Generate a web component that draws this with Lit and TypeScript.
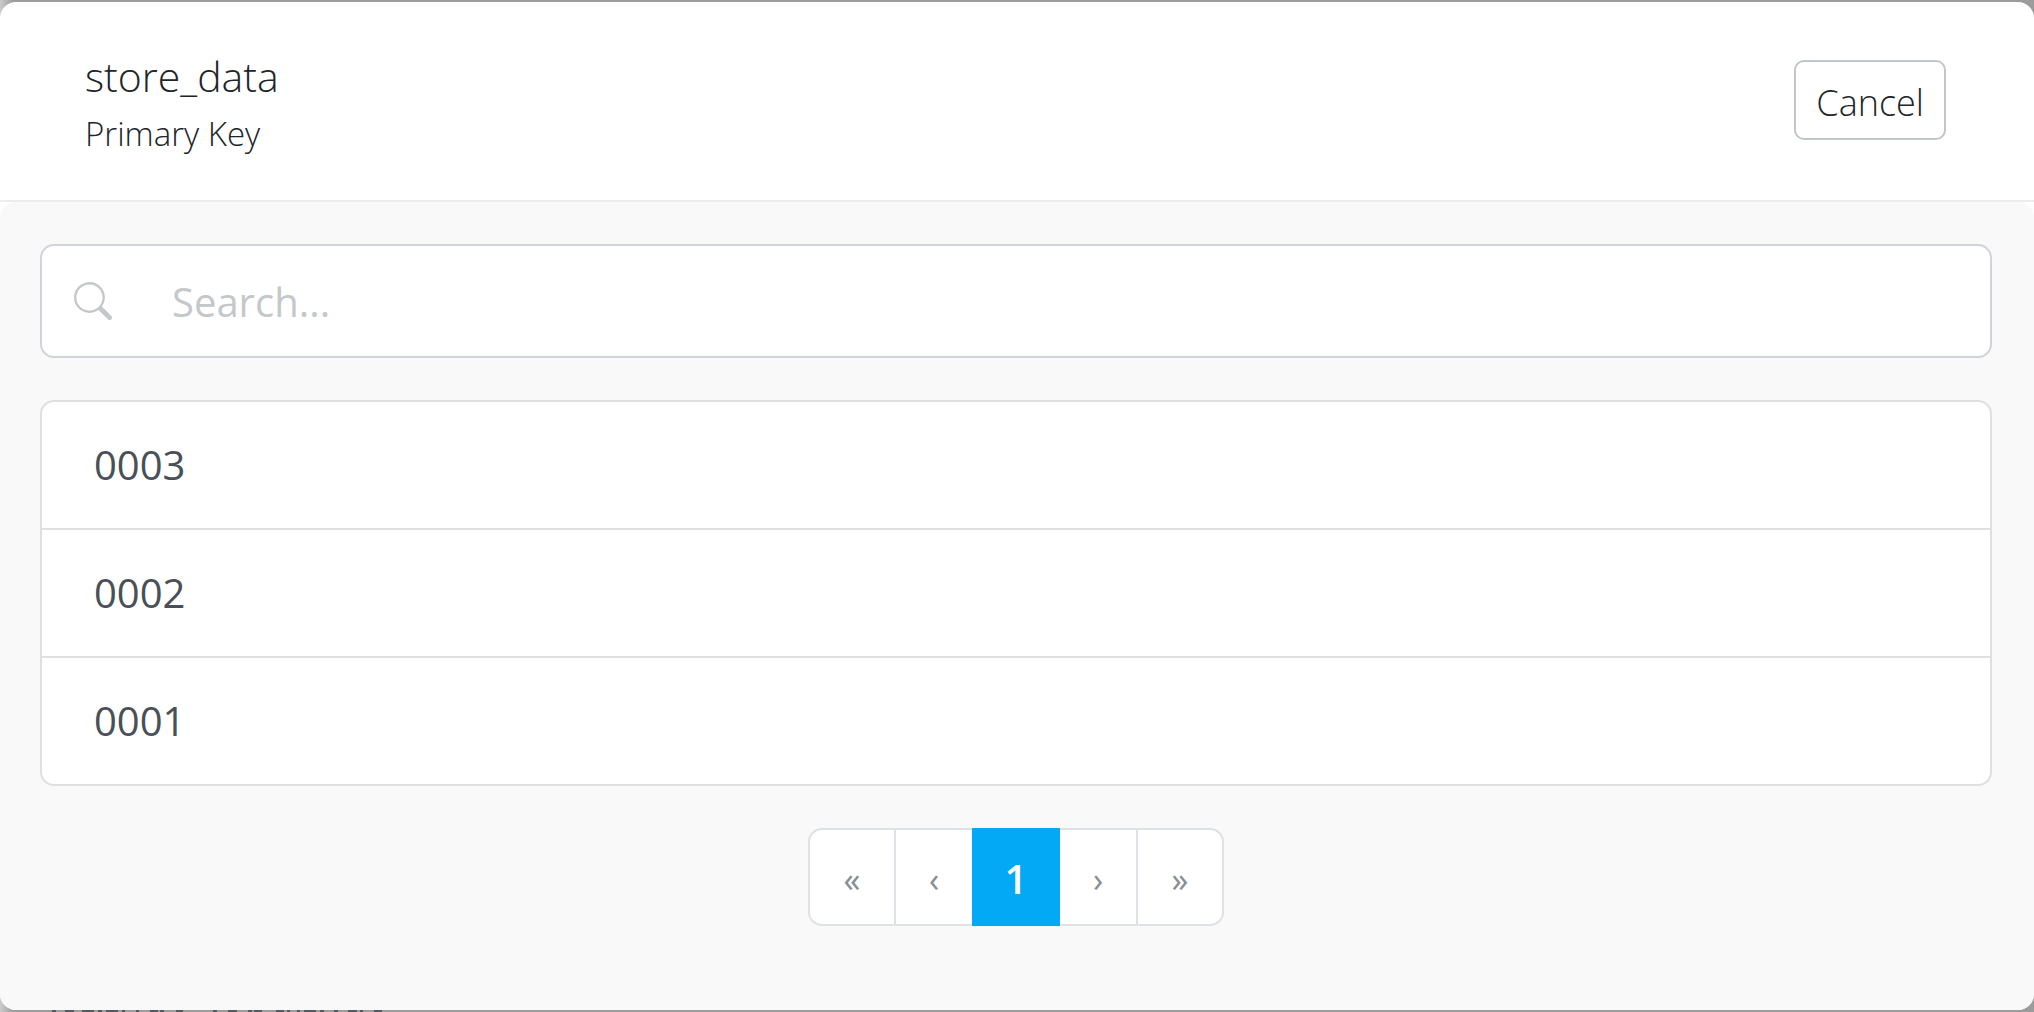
import { LitElement, html, css, svg } from "lit";
import { customElement, property, state } from "lit/decorators.js";

@customElement("search-field")
export class SearchField extends LitElement {
  static styles = css`
    :host { display: block; }
    .field {
      box-sizing: border-box;
      display: flex;
      align-items: center;
      height: 114px;
      padding: 0 32px;
      gap: 60px;
      background: #fff;
      border: 2px solid #ced4da;
      border-radius: 14px;
    }
    .icon { flex: none; width: 38px; height: 38px; fill: #c4c8cb; }
    .input {
      flex: 1;
      min-width: 0;
      padding: 2px 0 0;
      border: 0;
      outline: 0;
      background: transparent;
      color: #212529;
      font: 400 40px/60px "Open Sans", "Noto Sans", sans-serif;
    }
    .input::placeholder { color: #c4c8cb; opacity: 1; }
  `;

  render() {
    return html`
      <div class="field">
        <svg class="icon" viewBox="0 0 16 16" aria-hidden="true">
          <path d="M11.742 10.344a6.5 6.5 0 1 0-1.397 1.398h-.001c.03.04.062.078.098.115l3.85 3.85a1 1 0 0 0 1.415-1.414l-3.85-3.85a1.007 1.007 0 0 0-.115-.1zM12 6.5a5.5 5.5 0 1 1-11 0 5.5 5.5 0 0 1 11 0z" />
        </svg>
        <input class="input" type="text" placeholder="Search..." aria-label="Search" />
      </div>
    `;
  }
}

@customElement("key-list")
export class KeyList extends LitElement {
  @property({ attribute: false }) items: string[] = [];

  static styles = css`
    :host { display: block; }
    .list {
      margin: 0;
      padding: 0;
      list-style: none;
      background: #fff;
      border: 2px solid #dfdfdf;
      border-radius: 14px;
      overflow: hidden;
    }
    .row + .row { border-top: 2px solid #dfdfdf; }
    .item {
      display: block;
      width: 100%;
      padding: 32px 52px;
      border: 0;
      background: none;
      color: #495057;
      text-align: left;
      font: 400 40px/62px "Open Sans", "Noto Sans", sans-serif;
      cursor: pointer;
    }
  `;

  render() {
    return html`
      <ul class="list">
        ${this.items.map((item) => html`<li class="row"><button class="item" type="button">${item}</button></li>`)}
      </ul>
    `;
  }
}

@customElement("page-nav")
export class PageNav extends LitElement {
  @state() private page = 1;

  static styles = css`
    :host { display: block; }
    .pages { display: flex; justify-content: center; }
    .page {
      box-sizing: border-box;
      height: 98px;
      padding: 4px 0 0;
      margin: 0 0 0 -2px;
      border: 2px solid #dee2e6;
      background: #fff;
      color: #868e96;
      font: 400 34px/60px "Open Sans", "Noto Sans", sans-serif;
      cursor: pointer;
    }
    .narrow { width: 80px; }
    .wide { width: 88px; }
    .page:first-child { margin-left: 0; border-radius: 14px 0 0 14px; }
    .page:last-child { border-radius: 0 14px 14px 0; }
    .active {
      position: relative;
      border-color: #03a9f4;
      background: #03a9f4;
      color: #fff;
      font-size: 40px;
      font-weight: 600;
    }
  `;

  render() {
    return html`
      <nav class="pages" aria-label="Pages">
        <button class="page wide" type="button" aria-label="First page">«</button>
        <button class="page narrow" type="button" aria-label="Previous page">‹</button>
        <button class="page wide active" type="button" aria-current="page">${this.page}</button>
        <button class="page narrow" type="button" aria-label="Next page">›</button>
        <button class="page wide" type="button" aria-label="Last page">»</button>
      </nav>
    `;
  }
}

/* Tops of the page text that peek out under the dialog: [x, width]. */
const backdropMarks: Array<[number, number]> = [
  [52, 4], [65, 9], [82, 12], [98, 4], [106, 12], [122, 3], [136, 3], [150, 8], [160, 4], [176, 7],
  [213, 4], [228, 9], [248, 4], [254, 8], [276, 8], [287, 3], [297, 3], [304, 12], [320, 4], [334, 4],
  [348, 9], [360, 3], [374, 8],
];

@customElement("app-root")
export class AppRoot extends LitElement {
  static styles = css`
    :host { display: block; font-family: "Open Sans", "Noto Sans", sans-serif; color: #212529; }
    .backdrop {
      display: flex;
      flex-direction: column;
      min-height: 100vh;
      background: linear-gradient(90deg, #cbcbcb, #9c9c9c 14px);
    }
    .dialog {
      flex: 1;
      display: flex;
      flex-direction: column;
      margin-top: 2px;
      background: #fff;
      border-radius: 16px;
      overflow: hidden;
    }
    .header {
      display: flex;
      align-items: flex-start;
      justify-content: space-between;
      padding: 46px 88px 36px 85px;
      border-bottom: 2px solid #ededed;
    }
    .title { margin: 0; font-size: 41px; line-height: 56px; font-weight: 300; }
    .subtitle { margin: 0; font-size: 33px; line-height: 60px; font-weight: 300; }
    .cancel {
      box-sizing: border-box;
      height: 80px;
      margin-top: 12px;
      padding: 6px 20px 0;
      border: 2px solid #c1c6cb;
      border-radius: 10px;
      background: #fff;
      color: #212529;
      font: 300 36px/60px "Open Sans", "Noto Sans", sans-serif;
      cursor: pointer;
    }
    .body {
      flex: 1;
      display: flex;
      flex-direction: column;
      gap: 42px;
      padding: 42px 42px 42px 40px;
      background: #f9f9f9;
      border-radius: 16px 16px 0 0;
    }
    .marks { display: block; flex: none; width: 400px; height: 2px; fill: #545a60; }
  `;

  render() {
    return html`
      <div class="backdrop">
        <main class="dialog">
          <header class="header">
            <div>
              <h1 class="title">store_data</h1>
              <p class="subtitle">Primary Key</p>
            </div>
            <button class="cancel" type="button">Cancel</button>
          </header>
          <section class="body">
            <search-field></search-field>
            <key-list .items=${["0003", "0002", "0001"]}></key-list>
            <page-nav></page-nav>
          </section>
        </main>
        <svg class="marks" viewBox="0 0 400 2" aria-hidden="true">
          ${backdropMarks.map(([x, w]) => svg`<rect x=${x} y="0" width=${w} height="2" />`)}
        </svg>
      </div>
    `;
  }
}
